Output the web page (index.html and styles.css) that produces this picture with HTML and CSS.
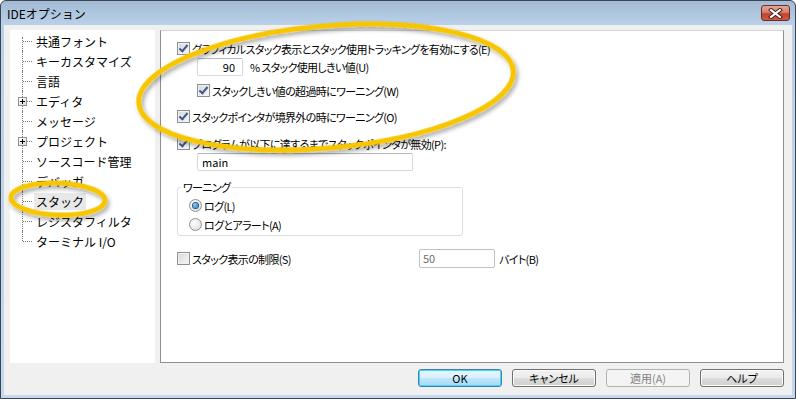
FILE: index.html
```html
<!DOCTYPE html>
<html lang="ja">
<head>
    <meta charset="UTF-8">
    <meta name="viewport" content="width=device-width, initial-scale=1.0">
    <title>IDEオプション</title>
    <link rel="stylesheet" href="styles.css">
</head>
<body>
    <div class="window">
        <div class="titlebar">
            <span class="title">IDEオプション</span>
            <span class="close">
                <svg width="15" height="11" viewBox="0 0 15 11">
                    <path d="M3 2 L12 9 M12 2 L3 9" stroke="#3d1612" stroke-width="4" stroke-linecap="square"/>
                    <path d="M3 2 L12 9 M12 2 L3 9" stroke="#fff" stroke-width="2.2" stroke-linecap="square"/>
                </svg>
            </span>
        </div>

        <div class="client">
            <div class="main">
                <ul class="tree">
                    <li class="node"><span class="twig"></span><span class="label">共通フォント</span></li>
                    <li class="node"><span class="twig"></span><span class="label">キーカスタマイズ</span></li>
                    <li class="node"><span class="twig"></span><span class="label">言語</span></li>
                    <li class="node"><span class="twig"><span class="plus"></span></span><span class="label">エディタ</span></li>
                    <li class="node"><span class="twig"></span><span class="label">メッセージ</span></li>
                    <li class="node"><span class="twig"><span class="plus"></span></span><span class="label">プロジェクト</span></li>
                    <li class="node"><span class="twig"></span><span class="label">ソースコード管理</span></li>
                    <li class="node"><span class="twig"></span><span class="label">デバッガ</span></li>
                    <li class="node"><span class="twig"></span><span class="label selected">スタック</span></li>
                    <li class="node"><span class="twig"></span><span class="label">レジスタフィルタ</span></li>
                    <li class="node"><span class="twig"></span><span class="label">ターミナル I/O</span></li>
                </ul>

                <div class="pane">
                    <label class="check"><span class="cb on"></span>グラフィカルスタック表示とスタック使用トラッキングを有効にする(E)</label>
                    <div class="threshold">
                        <span class="field num">90</span>
                        <span>% スタック使用しきい値(U)</span>
                    </div>
                    <label class="check warn"><span class="cb on"></span>スタックしきい値の超過時にワーニング(W)</label>
                    <label class="check bounds"><span class="cb on"></span>スタックポインタが境界外の時にワーニング(O)</label>
                    <label class="check invalid"><span class="cb on"></span>プログラムが以下に達するまでスタックポインタが無効(P):</label>
                    <span class="field entry">main</span>

                    <div class="group">
                        <div class="group-title">ワーニング</div>
                        <label class="radio"><span class="rb on"></span>ログ(L)</label>
                        <label class="radio second"><span class="rb"></span>ログとアラート(A)</label>
                    </div>

                    <div class="limit">
                        <label class="check limit-check"><span class="cb"></span>スタック表示の制限(S)</label>
                        <span class="field bytes">50</span>
                        <span>バイト(B)</span>
                    </div>
                </div>
            </div>

            <div class="footer">
                <button class="btn default">OK</button>
                <button class="btn">キャンセル</button>
                <button class="btn" disabled>適用(A)</button>
                <button class="btn">ヘルプ</button>
            </div>
        </div>

        <svg class="marks" width="796" height="399" viewBox="0 0 796 399">
            <defs>
                <filter id="shade" x="-10%" y="-20%" width="120%" height="140%">
                    <feDropShadow dx="2" dy="3" stdDeviation="2" flood-color="#000" flood-opacity="0.35"/>
                </filter>
            </defs>
            <ellipse cx="326" cy="87" rx="188" ry="61" transform="rotate(-5 326 87)" fill="none" stroke="#f7c600" stroke-width="5" filter="url(#shade)"/>
            <ellipse cx="58" cy="199" rx="47" ry="16" transform="rotate(2 58 199)" fill="none" stroke="#f7c600" stroke-width="5" filter="url(#shade)"/>
        </svg>
    </div>
</body>
</html>
```

FILE: styles.css
```css
body {
    margin: 0;
    font-family: "Noto Sans CJK JP", "Liberation Sans", sans-serif;
    font-size: 12px;
    color: #000;
}
.window {
    position: relative;
    width: 796px;
    height: 399px;
    box-sizing: border-box;
    border: 1px solid #3b4550;
    border-radius: 6px 6px 0 0;
    background: linear-gradient(#a3bad4, #bad1e9 24px, #c4d9ef);
    display: flex;
    flex-direction: column;
    overflow: hidden;
}
.titlebar {
    height: 24px;
    display: flex;
    justify-content: space-between;
    padding: 0 5px 0 6px;
}
.title {
    line-height: 25px;
}
.close {
    margin-top: 4px;
    width: 29px;
    height: 16px;
    box-sizing: border-box;
    border: 1px solid #6f2b24;
    border-radius: 3px;
    background: linear-gradient(#e3a697, #d3826f 45%, #c2432f 55%, #cd5a45);
    display: flex;
    justify-content: center;
    align-items: center;
}
.client {
    flex: 1;
    margin: 0 3px 3px;
    background: #f0f0f0;
    padding: 5px 8px 0 6px;
}
.main {
    display: flex;
    gap: 5px;
    height: 333px;
}

/* tree */
.tree {
    width: 145px;
    box-sizing: border-box;
    margin: 0;
    padding: 1px 0 0 12px;
    list-style: none;
    background: #fff;
}
.node {
    display: flex;
    align-items: center;
    height: 20px;
}
.twig {
    position: relative;
    width: 12px;
    height: 20px;
    flex: none;
}
.twig::before {
    content: "";
    position: absolute;
    left: 0;
    top: 0;
    bottom: 0;
    border-left: 1px dotted #7a7a7a;
}
.twig::after {
    content: "";
    position: absolute;
    left: 1px;
    top: 10px;
    width: 9px;
    border-top: 1px dotted #7a7a7a;
}
.node:first-child .twig::before {
    top: 6px;
}
.node:last-child .twig::before {
    bottom: 10px;
}
.plus {
    position: absolute;
    z-index: 1;
    left: -4px;
    top: 6px;
    width: 9px;
    height: 9px;
    box-sizing: border-box;
    border: 1px solid #919191;
    background: linear-gradient(135deg, #fff, #dcdcdc);
}
.plus::before,
.plus::after {
    content: "";
    position: absolute;
    background: #000;
}
.plus::before {
    left: 1px;
    top: 3px;
    width: 5px;
    height: 1px;
}
.plus::after {
    left: 3px;
    top: 1px;
    width: 1px;
    height: 5px;
}
.label {
    padding: 0 2px;
    line-height: 17px;
    white-space: nowrap;
}
.label.selected {
    background: #e8e8e8;
}

/* right pane */
.pane {
    flex: 1;
    box-sizing: border-box;
    background: #fff;
    border: 1px solid #8d8e92;
    border-top-color: #d6d6d6;
    padding: 11px 0 0 16px;
    display: flex;
    flex-direction: column;
    align-items: flex-start;
    font-size: 11px;
    letter-spacing: -0.65px;
    font-feature-settings: "palt";
}
.check,
.radio {
    display: flex;
    align-items: center;
    gap: 2px;
    height: 13px;
    white-space: nowrap;
}
.cb {
    width: 13px;
    height: 13px;
    box-sizing: border-box;
    border: 1px solid #8e8f8f;
    background: linear-gradient(135deg, #d4d6d8, #f7f7f7);
    box-shadow: inset 0 0 0 1px #f1f1f1;
    flex: none;
    position: relative;
}
.cb.on::after {
    content: "";
    position: absolute;
    left: 3px;
    top: 0px;
    width: 3px;
    height: 7px;
    border: solid #41568a;
    border-width: 0 2px 2px 0;
    transform: rotate(40deg);
}
.threshold {
    display: flex;
    align-items: center;
    gap: 7px;
    margin: 3px 0 0 20px;
    white-space: nowrap;
}
.field {
    height: 18px;
    box-sizing: border-box;
    border: 1px solid #d6d9de;
    border-top-color: #b5b8be;
    border-radius: 2px;
    line-height: 16px;
    background: #fff;
    letter-spacing: 0;
}
.field.num {
    width: 46px;
    text-align: right;
    padding-right: 7px;
}
.warn {
    margin: 8px 0 0 20px;
}
.bounds {
    margin-top: 13px;
}
.invalid {
    margin-top: 14px;
}
.field.entry {
    width: 216px;
    margin: 3px 0 0 20px;
    padding-left: 4px;
}
.group {
    width: 286px;
    box-sizing: border-box;
    margin-top: 16px;
    border: 1px solid #d5dfe5;
    border-radius: 3px;
    padding: 0 0 4px 11px;
}
.group-title {
    width: fit-content;
    margin: -8px 0 0 -8px;
    padding: 0 2px;
    line-height: 14px;
    background: #fff;
}
.group .radio {
    margin-top: 5px;
}
.group .radio.second {
    margin-top: 6px;
}
.rb {
    width: 13px;
    height: 13px;
    box-sizing: border-box;
    border: 1px solid #8e8f8f;
    border-radius: 50%;
    background: radial-gradient(circle at 35% 35%, #fff, #d6d7d9);
    flex: none;
    display: flex;
    justify-content: center;
    align-items: center;
}
.rb.on::after {
    content: "";
    width: 5px;
    height: 5px;
    border-radius: 50%;
    background: radial-gradient(circle at 35% 35%, #8fd0f5, #1a65a8);
    box-shadow: 0 0 0 1px #27548a;
}
.limit {
    display: flex;
    align-items: center;
    height: 19px;
    margin-top: 13px;
    white-space: nowrap;
}
.limit-check {
    width: 242px;
}
.field.bytes {
    width: 76px;
    height: 19px;
    padding-left: 3px;
    color: #6d6d6d;
    border-color: #c2c2c2;
    margin-right: 4px;
}

/* buttons */
.footer {
    display: flex;
    justify-content: flex-end;
    gap: 10px;
    padding-top: 6px;
}
.btn {
    width: 84px;
    height: 18px;
    padding: 0;
    font: inherit;
    font-size: 11px;
    font-feature-settings: "palt";
    line-height: 16px;
    color: #000;
    border: 1px solid #707070;
    border-radius: 3px;
    background: linear-gradient(#f2f2f2, #ebebeb 50%, #dddddd 51%, #cfcfcf);
    box-shadow: inset 0 0 0 1px #fbfbfb;
}
.btn.default {
    border-color: #3c7fb1;
    background: linear-gradient(#eaf6fd, #d9f0fc 50%, #bee6fd 51%, #a7d9f5);
    box-shadow: inset 0 0 0 1px #48d7fb;
}
.btn:disabled {
    color: #838383;
    border-color: #adb2b5;
    background: #f4f4f4;
    box-shadow: none;
}

.marks {
    position: absolute;
    left: -1px;
    top: -1px;
    pointer-events: none;
}
```
